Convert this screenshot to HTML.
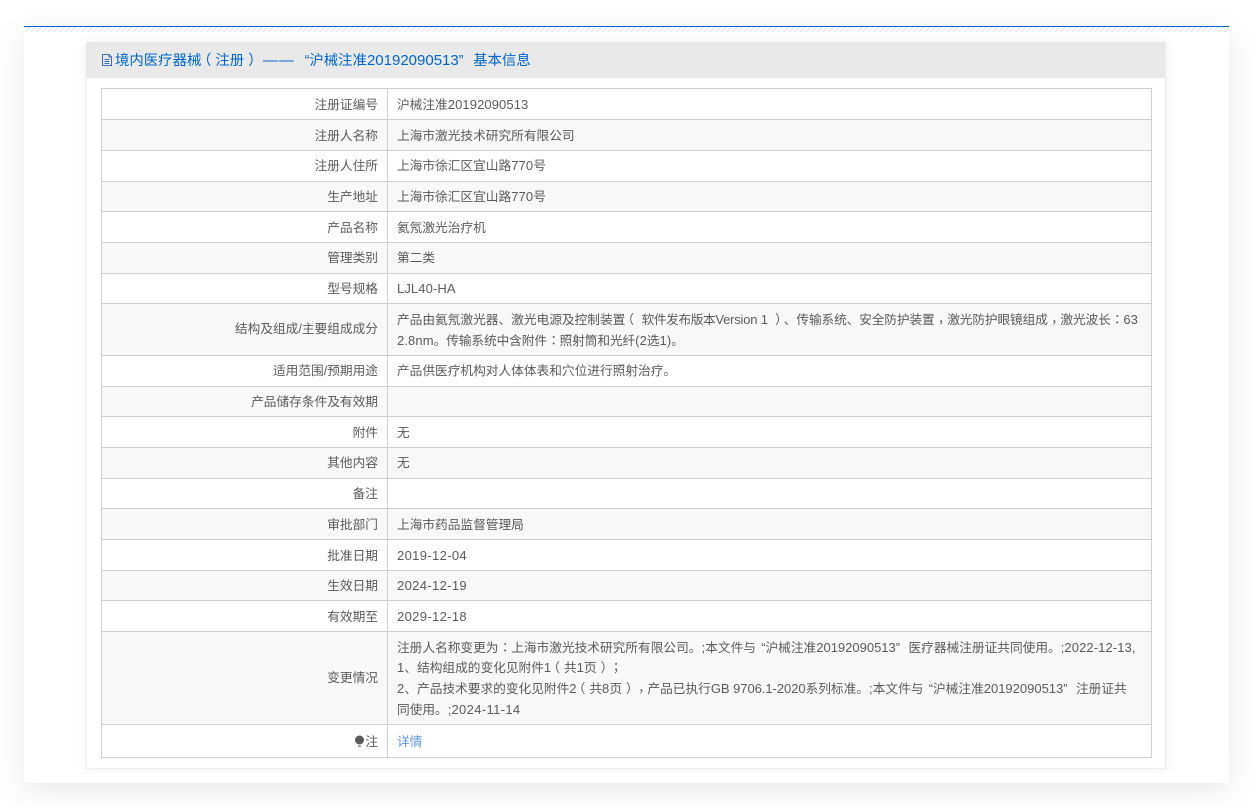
<!DOCTYPE html>
<html lang="zh"><head><meta charset="utf-8"><style>
html,body{margin:0;padding:0;width:1253px;height:807px;overflow:hidden;background:#fff}
body{font:12.7px/20px "Liberation Sans","Noto Sans CJK SC",sans-serif;color:#5a5a5a;position:relative}
#outer{position:absolute;left:24px;top:26px;width:1205px;height:757px;background:#fff;box-shadow:0 8px 30px rgba(0,0,0,.09)}
#blue{position:absolute;left:0;top:0;width:1205px;height:1px;background:#0066cc}
#hatch{position:absolute;left:0;top:1px;width:1205px;height:5px;background:repeating-linear-gradient(135deg,#e4e4e4 0,#e4e4e4 1px,#fff 1px,#fff 4px)}
#panel{position:absolute;left:86px;top:42px;width:1078px;height:726px;background:#fff;border:1px solid #eee;border-top:0;box-shadow:0 0 10px rgba(0,0,0,.07)}
#head{position:absolute;left:86px;top:42px;width:1079px;height:36px;background:#e9e9e9;color:#0066cc;line-height:36px;white-space:nowrap;font-size:14.4px}
#head svg{position:absolute;left:15px;top:11px}
#head span{position:absolute;top:1px}
#head .lq{width:1em}
.r{position:absolute;left:101px;width:1050px;border-top:1px solid #cfcfcf;box-sizing:border-box}
.g{background:#f8f8f8}
.l{position:absolute;right:773px;white-space:nowrap}
.v{position:absolute;left:296px;white-space:nowrap}
.n{font-size:13px;letter-spacing:.1px}
.d{font-size:13px;letter-spacing:.35px}
.c,.lp,.rp,.lq,.rq{display:inline-block;width:1em;font-style:normal}
.c{transform:translate(3.5px,-1px)}
.lp{transform:translateX(-4px)}
.rp{transform:translateX(4px)}
.lq{text-align:right;width:.75em}
.rq{text-align:left}
#L,#M,#R{position:absolute;top:88px;width:1px;height:670px;background:#cfcfcf}
#L{left:101px}#M{left:387px}#R{left:1151px}
#B{position:absolute;left:101px;top:757px;width:1051px;height:1px;background:#cfcfcf}
a{color:#5b96e0;text-decoration:none}
</style></head><body>
<div id="outer"><div id="blue"></div><div id="hatch"></div></div>
<div id="panel"></div>
<div id="head"><svg width="12" height="14" viewBox="0 0 12 14" fill="none" stroke="#3a6cc0" stroke-width="1"><path d="M1.5 1.5H8L10.5 4V12.5H1.5Z"/><path d="M8 1.5V4H10.5M3.5 6.5H8.5M3.5 8.5H8.5M3.5 10.5H8.5"/></svg><span style="left:29px">境内医疗器械</span><span style="left:115px"><i class="lp">（</i>注册<i class="rp">）</i></span><span style="left:177px;letter-spacing:1px;transform:scaleX(1.03);transform-origin:left">——</span><span style="left:209px"><i class="lq">“</i>沪械注准<b style="font-weight:400;font-size:15px">20192090513</b><i class="rq">”</i>基本信息</span></div>

<div class="r" style="top:88px;height:32px"><div class="l" style="top:6px">注册证编号</div><div class="v" style="top:6px">沪械注准<span class="n">20192090513</span></div></div>
<div class="r g" style="top:119px;height:32px"><div class="l" style="top:6px">注册人名称</div><div class="v" style="top:6px">上海市激光技术研究所有限公司</div></div>
<div class="r" style="top:150px;height:32px"><div class="l" style="top:5px">注册人住所</div><div class="v" style="top:5px">上海市徐汇区宜山路<span class="n">770</span>号</div></div>
<div class="r g" style="top:181px;height:31px"><div class="l" style="top:5px">生产地址</div><div class="v" style="top:5px">上海市徐汇区宜山路<span class="n">770</span>号</div></div>
<div class="r" style="top:211px;height:32px"><div class="l" style="top:6px">产品名称</div><div class="v" style="top:6px">氦氖激光治疗机</div></div>
<div class="r g" style="top:242px;height:32px"><div class="l" style="top:5px">管理类别</div><div class="v" style="top:5px">第二类</div></div>
<div class="r" style="top:273px;height:31px"><div class="l" style="top:5px">型号规格</div><div class="v" style="top:5px"><span class="n">LJL40-HA</span></div></div>
<div class="r g" style="top:303px;height:53px"><div class="l" style="top:15px">结构及组成/主要组成成分</div>
<div class="v" style="top:6px">产品由氦氖激光器、激光电源及控制装置<i class="lp">（</i> <span style="letter-spacing:-.4px">软件发布版本</span><span class="n" style="letter-spacing:-.2px">Version 1 </span><i class="rp">）</i><span style="letter-spacing:-.13px">、传输系统、安全防护装置<i class="c">，</i>激光防护眼镜组成<i class="c">，</i>激光波长<i class="c">：</i></span><span class="n">63</span></div>
<div class="v" style="top:27px;letter-spacing:-.1px"><span class="n">2.8nm</span>。传输系统中含附件<i class="c">：</i>照射筒和光纤<span class="n">(2</span>选<span class="n">1)</span>。</div></div>
<div class="r" style="top:355px;height:32px"><div class="l" style="top:5px">适用范围/预期用途</div><div class="v" style="top:5px">产品供医疗机构对人体体表和穴位进行照射治疗。</div></div>
<div class="r g" style="top:386px;height:31px"><div class="l" style="top:5px">产品储存条件及有效期</div></div>
<div class="r" style="top:416px;height:32px"><div class="l" style="top:6px">附件</div><div class="v" style="top:6px">无</div></div>
<div class="r g" style="top:447px;height:32px"><div class="l" style="top:5px">其他内容</div><div class="v" style="top:5px">无</div></div>
<div class="r" style="top:478px;height:31px"><div class="l" style="top:5px">备注</div></div>
<div class="r g" style="top:508px;height:32px"><div class="l" style="top:6px">审批部门</div><div class="v" style="top:6px">上海市药品监督管理局</div></div>
<div class="r" style="top:539px;height:32px"><div class="l" style="top:6px">批准日期</div><div class="v" style="top:6px"><span class="d">2019-12-04</span></div></div>
<div class="r g" style="top:570px;height:31px"><div class="l" style="top:5px">生效日期</div><div class="v" style="top:5px"><span class="d">2024-12-19</span></div></div>
<div class="r" style="top:600px;height:32px"><div class="l" style="top:6px">有效期至</div><div class="v" style="top:6px"><span class="d">2029-12-18</span></div></div>
<div class="r g" style="top:631px;height:94px"><div class="l" style="top:36px">变更情况</div>
<div class="v" style="top:6px">注册人名称变更为<i class="c">：</i>上海市激光技术研究所有限公司。<span class="n">;</span>本文件与<i class="lq">“</i>沪械注准<span class="n" style="letter-spacing:0">20192090513</span><i class="rq">”</i>医疗器械注册证共同使用。<span class="n">;</span><span class="n">2022-12-13,</span></div>
<div class="v" style="top:26px"><span class="n">1</span>、结构组成的变化见附件<span class="n">1</span><i class="lp">（</i>共<span class="n">1</span>页<i class="rp">）</i><i class="c">；</i></div>
<div class="v" style="top:47px"><span class="n">2</span>、产品技术要求的变化见附件<span class="n">2</span><i class="lp">（</i>共<span class="n">8</span>页<i class="rp">）</i><i class="c">，</i>产品已执行<span class="n" style="letter-spacing:-.05px">GB 9706.1-2020</span>系列标准。<span class="n">;</span>本文件与<i class="lq">“</i>沪械注准<span class="n" style="letter-spacing:0">20192090513</span><i class="rq">”</i>注册证共</div>
<div class="v" style="top:68px">同使用。<span class="n">;</span><span class="d">2024-11-14</span></div></div>
<div class="r" style="top:724px;height:33px"><div class="l" style="top:7px"><svg width="11" height="13" viewBox="0 0 11 13" style="vertical-align:-2px"><circle cx="5.5" cy="5" r="4.5" fill="#5a5a5a"/><rect x="4" y="10.5" width="3" height="1.5" fill="#888"/></svg>注</div><div class="v" style="top:7px"><a>详情</a></div></div>
<div id="L"></div><div id="M"></div><div id="R"></div><div id="B"></div>
</body></html>
